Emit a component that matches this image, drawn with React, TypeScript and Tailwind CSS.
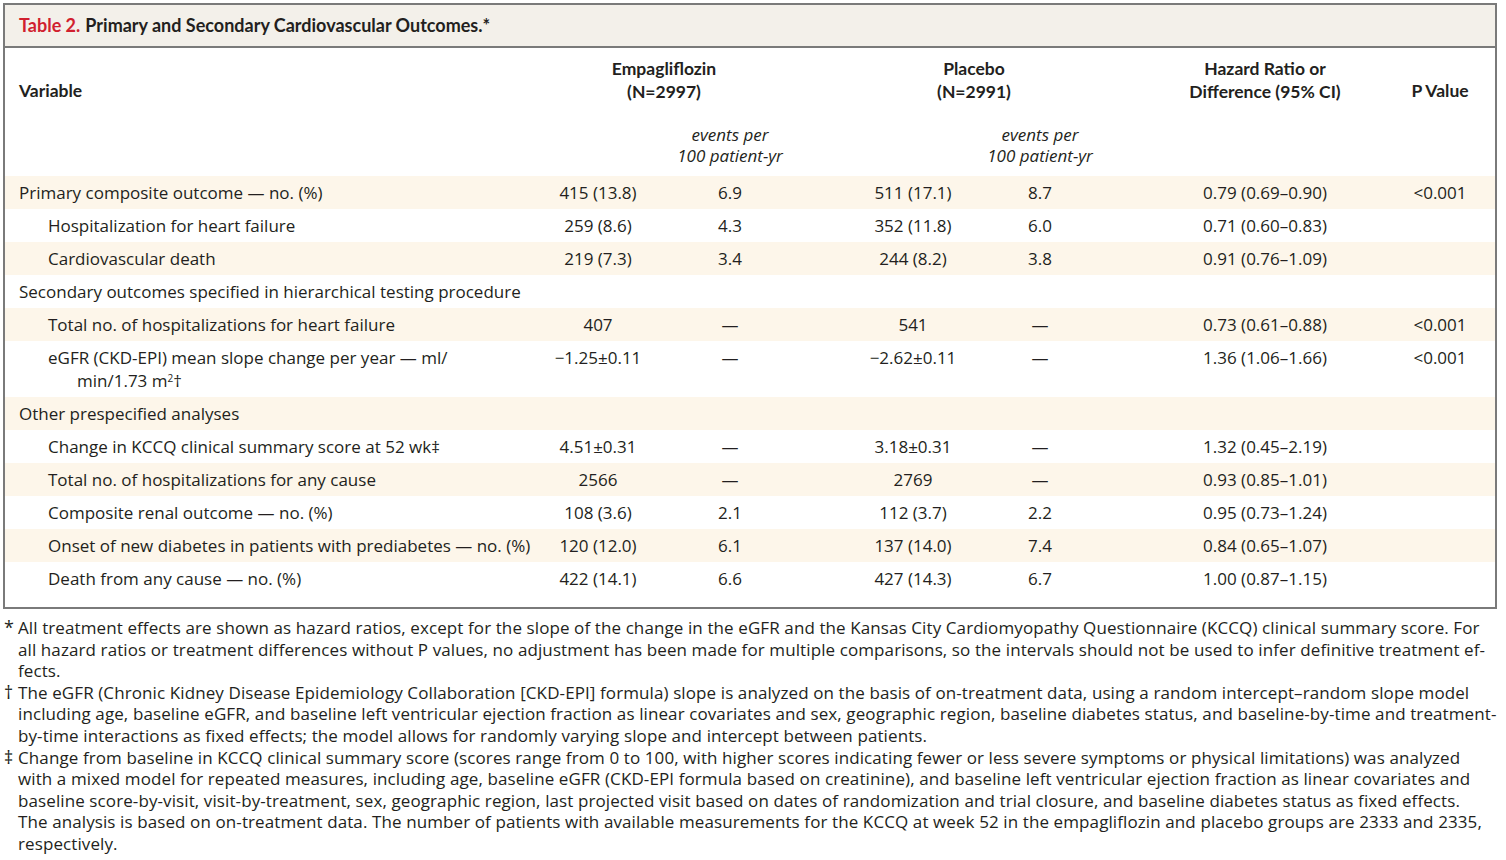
import React from "react";

type Row = {
  label: React.ReactNode;
  indent?: boolean;
  shaded?: boolean;
  cells?: string[];
};

const rows: Row[] = [
  { label: "Primary composite outcome — no. (%)", shaded: true, cells: ["415 (13.8)", "6.9", "511 (17.1)", "8.7", "0.79 (0.69–0.90)", "<0.001"] },
  { label: "Hospitalization for heart failure", indent: true, cells: ["259 (8.6)", "4.3", "352 (11.8)", "6.0", "0.71 (0.60–0.83)", ""] },
  { label: "Cardiovascular death", indent: true, shaded: true, cells: ["219 (7.3)", "3.4", "244 (8.2)", "3.8", "0.91 (0.76–1.09)", ""] },
  { label: "Secondary outcomes specified in hierarchical testing procedure" },
  { label: "Total no. of hospitalizations for heart failure", indent: true, shaded: true, cells: ["407", "—", "541", "—", "0.73 (0.61–0.88)", "<0.001"] },
  {
    label: (
      <>
        eGFR (CKD-EPI) mean slope change per year — ml/
        <br />
        <span className="pl-[29px]">
          min/1.73 m<sup className="text-[10px]">2</sup>†
        </span>
      </>
    ),
    indent: true,
    cells: ["−1.25±0.11", "—", "−2.62±0.11", "—", "1.36 (1.06–1.66)", "<0.001"],
  },
  { label: "Other prespecified analyses", shaded: true },
  { label: "Change in KCCQ clinical summary score at 52 wk‡", indent: true, cells: ["4.51±0.31", "—", "3.18±0.31", "—", "1.32 (0.45–2.19)", ""] },
  { label: "Total no. of hospitalizations for any cause", indent: true, shaded: true, cells: ["2566", "—", "2769", "—", "0.93 (0.85–1.01)", ""] },
  { label: "Composite renal outcome — no. (%)", indent: true, cells: ["108 (3.6)", "2.1", "112 (3.7)", "2.2", "0.95 (0.73–1.24)", ""] },
  { label: "Onset of new diabetes in patients with prediabetes — no. (%)", indent: true, shaded: true, cells: ["120 (12.0)", "6.1", "137 (14.0)", "7.4", "0.84 (0.65–1.07)", ""] },
  { label: "Death from any cause — no. (%)", indent: true, cells: ["422 (14.1)", "6.6", "427 (14.3)", "6.7", "1.00 (0.87–1.15)", ""] },
];

// column tracks: variable | emp n | emp rate | gap | plc n | plc rate | gap | HR | P
const grid = "grid grid-cols-[527px_132px_132px_51px_132px_122px_39px_250px_100px]";

const notes: { mark: string; lines: string[] }[] = [
  {
    mark: "*",
    lines: [
      "All treatment effects are shown as hazard ratios, except for the slope of the change in the eGFR and the Kansas City Cardiomyopathy Questionnaire (KCCQ) clinical summary score. For",
      "all hazard ratios or treatment differences without P values, no adjustment has been made for multiple comparisons, so the intervals should not be used to infer definitive treatment ef-",
      "fects.",
    ],
  },
  {
    mark: "†",
    lines: [
      "The eGFR (Chronic Kidney Disease Epidemiology Collaboration [CKD-EPI] formula) slope is analyzed on the basis of on-treatment data, using a random intercept–random slope model",
      "including age, baseline eGFR, and baseline left ventricular ejection fraction as linear covariates and sex, geographic region, baseline diabetes status, and baseline-by-time and treatment-",
      "by-time interactions as fixed effects; the model allows for randomly varying slope and intercept between patients.",
    ],
  },
  {
    mark: "‡",
    lines: [
      "Change from baseline in KCCQ clinical summary score (scores range from 0 to 100, with higher scores indicating fewer or less severe symptoms or physical limitations) was analyzed",
      "with a mixed model for repeated measures, including age, baseline eGFR (CKD-EPI formula based on creatinine), and baseline left ventricular ejection fraction as linear covariates and",
      "baseline score-by-visit, visit-by-treatment, sex, geographic region, last projected visit based on dates of randomization and trial closure, and baseline diabetes status as fixed effects.",
      "The analysis is based on on-treatment data. The number of patients with available measurements for the KCCQ at week 52 in the empagliflozin and placebo groups are 2333 and 2335,",
      "respectively.",
    ],
  },
];

function DataRow({ row }: { row: Row }) {
  const c = row.cells ?? ["", "", "", "", "", ""];
  return (
    <div className={`${grid} py-[5px] leading-[23px] tracking-normal ${row.shaded ? "bg-[#fdf6ea]" : "bg-white"}`}>
      <div className={`whitespace-nowrap ${row.indent ? "pl-[43px]" : "pl-[14px]"}`}>{row.label}</div>
      <div className="text-center">{c[0]}</div>
      <div className="text-center">{c[1]}</div>
      <div />
      <div className="text-center">{c[2]}</div>
      <div className="text-center">{c[3]}</div>
      <div />
      <div className="text-center">{c[4]}</div>
      <div className="text-center">{c[5]}</div>
    </div>
  );
}

export default function App() {
  return (
    <div className="w-[1506px] h-[860px] bg-white text-[#231f20] pt-[3px] font-['Open_Sans','Noto_Sans',sans-serif] text-[17px] overflow-hidden">
      <div className="ml-[3px] w-[1494px] border-2 border-[#7a7a7a]">
        {/* title band */}
        <div className="h-[43px] bg-[#f3f0ea] border-b-2 border-[#7a7a7a] pl-[14px] flex items-center font-bold text-[18px] font-['Lato',sans-serif]">
          <span className="text-[#d11f2f]">Table 2.</span>
          <span className="ml-[5px]">Primary and Secondary Cardiovascular Outcomes.*</span>
        </div>

        {/* column heads */}
        <div className={`${grid} h-[128px] font-bold font-['Lato',sans-serif] text-[17.5px]`}>
          <div className="pl-[14px] pt-[31px] leading-[23px]">Variable</div>
          <div className="col-span-2 text-center pt-[9px] leading-[23px]">
            Empagliflozin
            <br />
            (N=2997)
          </div>
          <div />
          <div className="col-span-2 text-center pt-[9px] leading-[23px]">
            Placebo
            <br />
            (N=2991)
          </div>
          <div />
          <div className="text-center pt-[9px] leading-[23px]">
            Hazard Ratio or
            <br />
            Difference (95% CI)
          </div>
          <div className="text-center pt-[31px] leading-[23px]">P Value</div>
        </div>
        <div className={`${grid} -mt-[52px] h-[52px] italic font-normal leading-[21px]`}>
          <div />
          <div />
          <div className="text-center">
            events per
            <br />
            100 patient-yr
          </div>
          <div />
          <div />
          <div className="text-center">
            events per
            <br />
            100 patient-yr
          </div>
        </div>

        {rows.map((r, i) => (
          <DataRow key={i} row={r} />
        ))}
        <div className="h-[12px]" />
      </div>

      {/* footnotes */}
      <div className="pt-[8px] leading-[21.6px] tracking-[0.1px]">
        {notes.map((n) => (
          <div key={n.mark} className="flex">
            <div className="w-[18px] pl-[4px] shrink-0 text-[18px]">{n.mark}</div>
            <div className="whitespace-nowrap">
              {n.lines.map((l, i) => (
                <div key={i}>{l}</div>
              ))}
            </div>
          </div>
        ))}
      </div>
    </div>
  );
}
